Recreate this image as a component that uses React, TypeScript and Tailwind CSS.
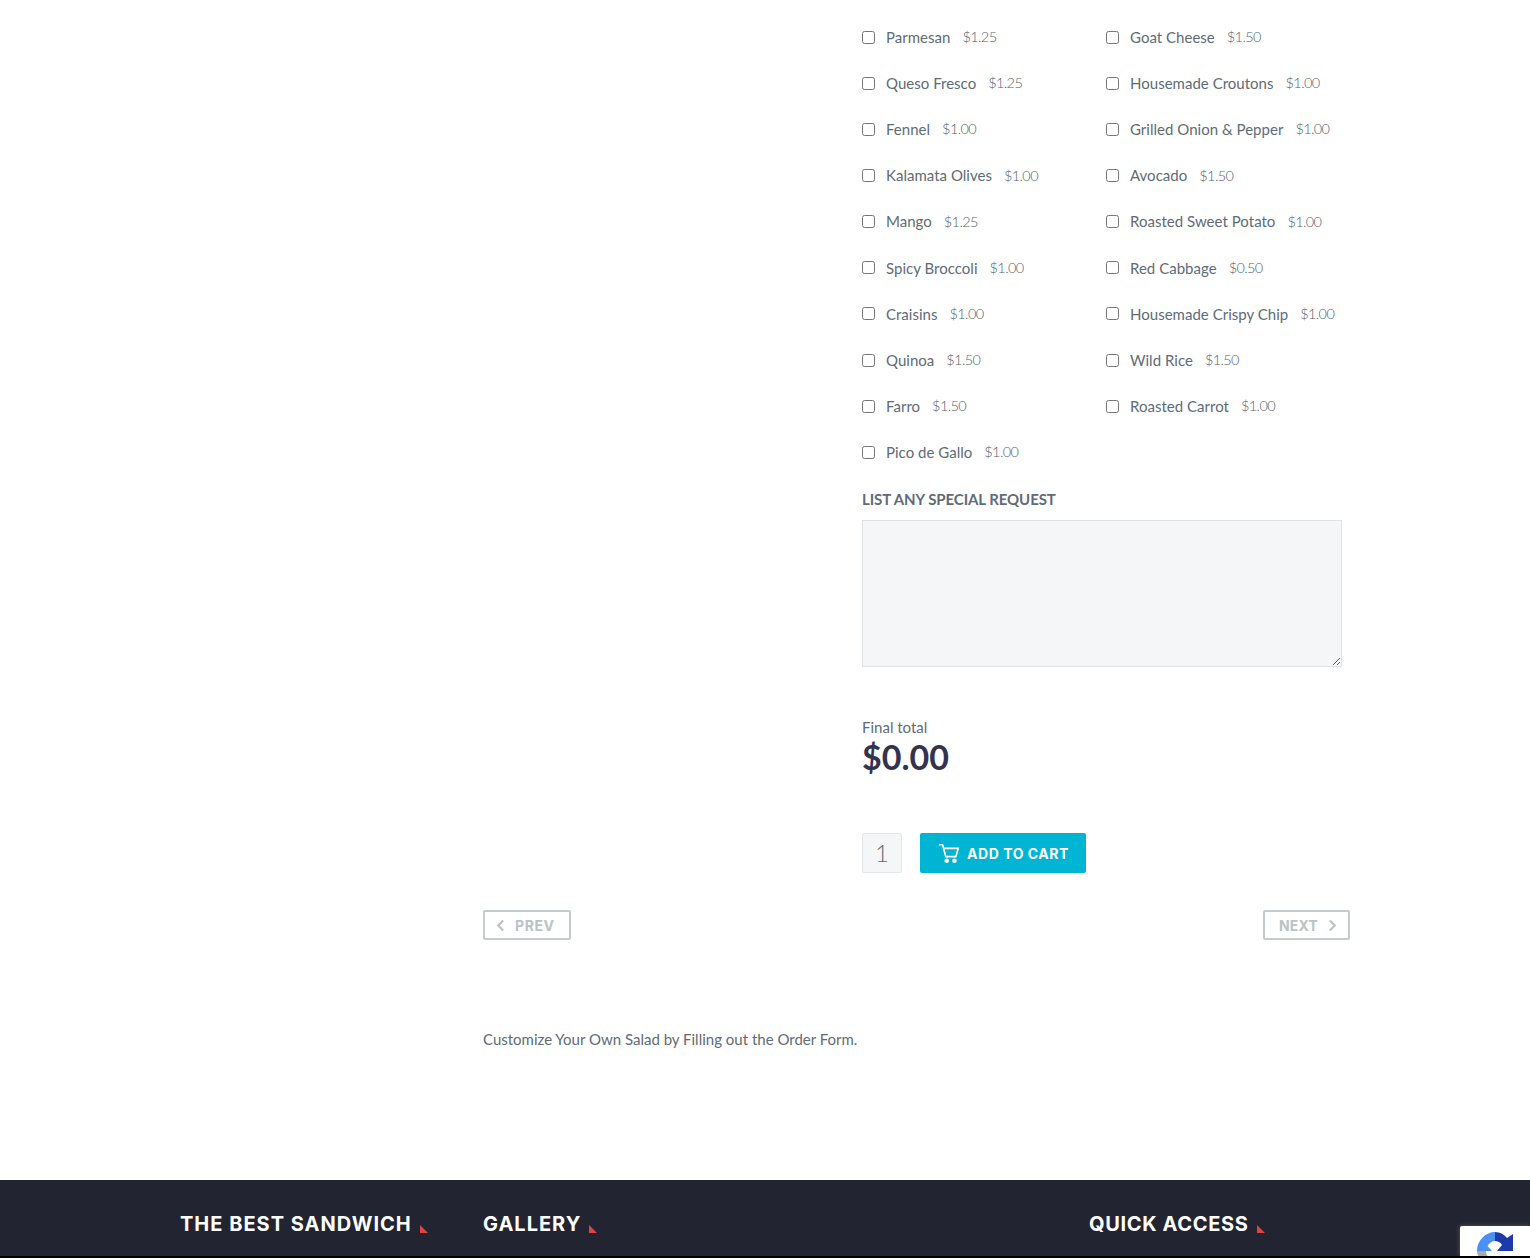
const LEFT_ITEMS = [
  ['Parmesan', '$1.25'],
  ['Queso Fresco', '$1.25'],
  ['Fennel', '$1.00'],
  ['Kalamata Olives', '$1.00'],
  ['Mango', '$1.25'],
  ['Spicy Broccoli', '$1.00'],
  ['Craisins', '$1.00'],
  ['Quinoa', '$1.50'],
  ['Farro', '$1.50'],
  ['Pico de Gallo', '$1.00'],
];

const RIGHT_ITEMS = [
  ['Goat Cheese', '$1.50'],
  ['Housemade Croutons', '$1.00'],
  ['Grilled Onion & Pepper', '$1.00'],
  ['Avocado', '$1.50'],
  ['Roasted Sweet Potato', '$1.00'],
  ['Red Cabbage', '$0.50'],
  ['Housemade Crispy Chip', '$1.00'],
  ['Wild Rice', '$1.50'],
  ['Roasted Carrot', '$1.00'],
];

function Topping({ name, price }: { name: string; price: string }) {
  return (
    <label className="flex items-center h-[46.15px] text-[15px] text-[#5f6b76]">
      <input type="checkbox" className="w-[13px] h-[13px] mr-[11px] shrink-0" />
      <span className="mr-3 tracking-[0.02px]">{name}</span>
      <span className="font-light text-[14.5px] tracking-[-0.6px] text-[#56626d]">{price}</span>
    </label>
  );
}

function FooterTitle({ children, wide }: { children: string; wide?: boolean }) {
  return (
    <h3 className={`flex items-end font-['Inter',sans-serif] font-bold text-[20px] leading-[24px] text-white ${wide ? 'tracking-[1px]' : 'tracking-[0.65px]'}`}>
      {children}
      <span className="ml-2 mb-[3px] w-0 h-0 border-r-[8px] border-r-transparent border-b-[8px] border-b-[#e04343]" />
    </h3>
  );
}

export default function App() {
  return (
    <div className="h-[1258px] overflow-hidden bg-white font-['Lato',sans-serif]">
      <main className="h-[1180px] pl-[483px] pr-[180px] pt-[14px]">
        <div className="ml-[379px] w-[488px]">
          <div className="grid grid-cols-[244px_244px]">
            <div>
              {LEFT_ITEMS.map(([name, price]) => (
                <Topping key={name} name={name} price={price} />
              ))}
            </div>
            <div>
              {RIGHT_ITEMS.map(([name, price]) => (
                <Topping key={name} name={name} price={price} />
              ))}
            </div>
          </div>

          <p className="mt-[14px] text-[15px] leading-[20px] font-bold tracking-[-0.08px] text-[#5f6b76]">LIST ANY SPECIAL REQUEST</p>
          <textarea className="block mt-[11px] w-[480px] h-[147px] bg-[#f4f6f7] border border-[#dfe3e6]" />

          <p className="mt-[50px] text-[15px] leading-[20px] text-[#5f6b76]">Final total</p>
          <p className="mt-0 text-[34px] leading-[40px] font-bold text-[#33334f]">$0.00</p>

          <div className="flex items-center gap-[18px] mt-[56px]">
            <div className="flex items-center justify-center w-10 h-10 bg-[#f4f6f7] border border-[#e4e7e9] rounded-[2px] font-light text-[24px] text-[#5f6b76]">
              1
            </div>
            <button className="flex items-center w-[166px] h-10 pl-[18px] bg-[#00b4d4] rounded-[2px] font-['Inter',sans-serif] font-bold text-[14px] tracking-[0.55px] text-white">
              <svg viewBox="0 0 24 24" className="w-[22px] h-[22px] mr-[7px]" fill="none" stroke="currentColor" strokeWidth="1.8">
                <path d="M1 3h4l3.5 13h11L22 7H6" />
                <circle cx="9.5" cy="20.5" r="1.6" fill="currentColor" />
                <circle cx="18" cy="20.5" r="1.6" fill="currentColor" />
              </svg>
              ADD TO CART
            </button>
          </div>
        </div>

        <div className="flex justify-between mt-[37px]">
          <button className="flex items-center w-[88px] h-[30px] pl-[11px] border-2 border-[#c3cbcd] rounded-[2px] font-['Inter',sans-serif] font-bold text-[14px] tracking-[0.6px] text-[#b9c3c6]">
            <svg viewBox="0 0 10 14" className="w-[9px] h-[13px] mr-[10px]" fill="none" stroke="currentColor" strokeWidth="2.4">
              <path d="M8 1.5 2.5 7 8 12.5" />
            </svg>
            PREV
          </button>
          <button className="flex items-center justify-end w-[87px] h-[30px] pr-[11px] border-2 border-[#c3cbcd] rounded-[2px] font-['Inter',sans-serif] font-bold text-[14px] tracking-[0.2px] text-[#b9c3c6]">
            NEXT
            <svg viewBox="0 0 10 14" className="w-[9px] h-[13px] ml-[10px]" fill="none" stroke="currentColor" strokeWidth="2.4">
              <path d="M2 1.5 7.5 7 2 12.5" />
            </svg>
          </button>
        </div>

        <p className="mt-[89px] text-[15px] leading-[20px] text-[#5f6b76]">Customize Your Own Salad by Filling out the Order Form.</p>
      </main>

      <footer className="relative h-[78px] bg-[#222431] border-b-2 border-black pl-[180px] pt-[32px] overflow-hidden">
        <div className="grid grid-cols-[303px_606px_1fr]">
          <FooterTitle wide>THE BEST SANDWICH</FooterTitle>
          <FooterTitle wide>GALLERY</FooterTitle>
          <FooterTitle>QUICK ACCESS</FooterTitle>
        </div>
        <div className="absolute left-[1460px] top-[46px] w-[70px] h-[30px] bg-white rounded-tl-[2px] shadow-[0_0_5px_rgba(128,128,128,0.6)] overflow-hidden">
          <svg viewBox="0 0 40 40" className="absolute left-[15px] top-[4px] w-[40px] h-[40px]">
            <path d="M20 2C25 2 29 4 32 8L38 4V21H22L27 15C25 12 23 11 20 11Z" fill="#1c3aa9" />
            <path d="M20 2C11 2 2 10 2 21H17L12.5 16C14 13 17 11 20 11Z" fill="#4a90f5" />
            <path d="M2 21H11C11 24 12 26 14 27L9 33C5 30 2 26 2 21Z" fill="#ababab" />
          </svg>
        </div>
      </footer>
    </div>
  );
}
